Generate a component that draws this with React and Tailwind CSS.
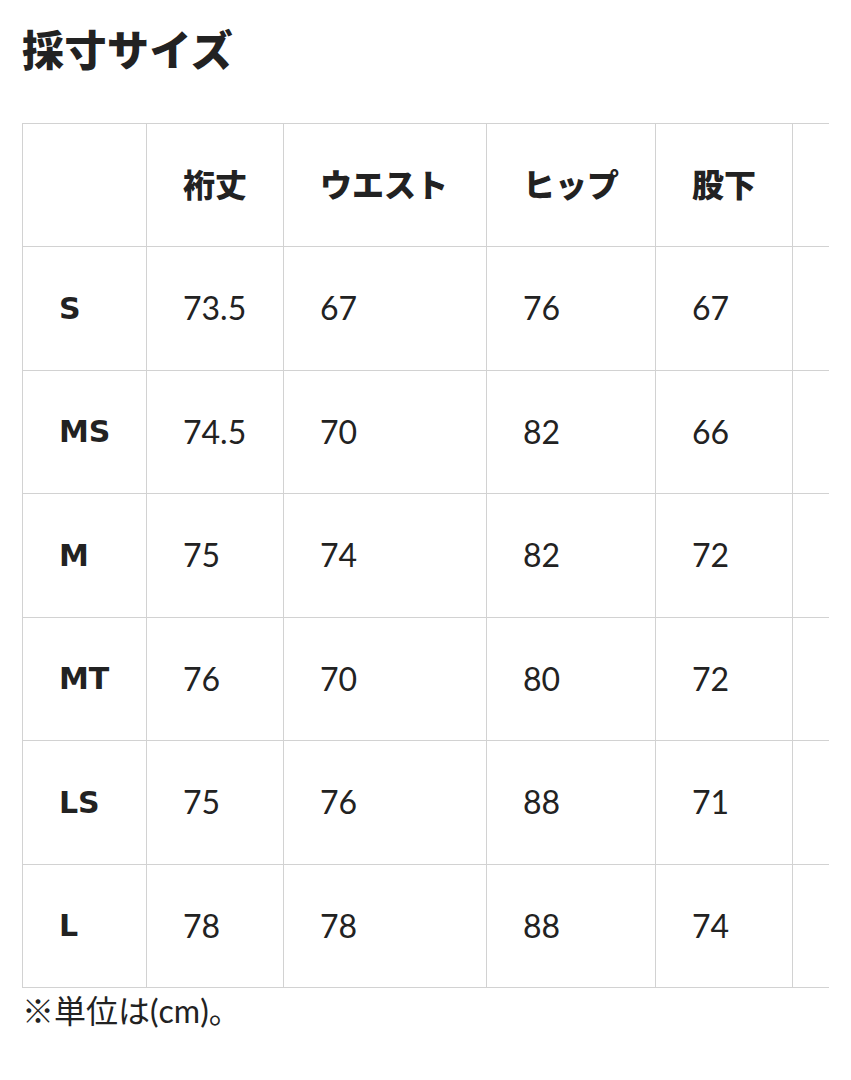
import React from 'react';

const columns = [
  { label: '', width: 'w-[124px]' },
  { label: '裄丈', width: 'w-[137px]' },
  { label: 'ウエスト', width: 'w-[203px]' },
  { label: 'ヒップ', width: 'w-[169px]' },
  { label: '股下', width: 'w-[137px]' },
  { label: '', width: 'w-[120px]' },
];

const rows = [
  { size: 'S', values: ['73.5', '67', '76', '67'] },
  { size: 'MS', values: ['74.5', '70', '82', '66'] },
  { size: 'M', values: ['75', '74', '82', '72'] },
  { size: 'MT', values: ['76', '70', '80', '72'] },
  { size: 'LS', values: ['75', '76', '88', '71'] },
  { size: 'L', values: ['78', '78', '88', '74'] },
];

const App = () => {
  return (
    <div className="min-h-screen bg-white pl-[22px] pt-[16px] text-[#222]">
      <h1 className="font-['Noto_Sans_CJK_JP',sans-serif] text-[42px] font-black leading-[63px] tracking-[0.5px]">
        採寸サイズ
      </h1>

      <div className="mt-[44px] w-[807px] overflow-hidden">
        <table className="w-[890px] table-fixed border-collapse border border-[#e2e2e2]">
          <thead>
            <tr className="h-[123px]">
              {columns.map((c, i) => (
                <th
                  key={i}
                  className={`${c.width} border border-[#d2d2d2] px-[36px] pb-[5px] text-left align-middle font-['Noto_Sans_CJK_JP',sans-serif] text-[32px] font-black whitespace-nowrap`}
                >
                  {c.label}
                </th>
              ))}
            </tr>
          </thead>
          <tbody>
            {rows.map((row) => (
              <tr key={row.size} className="h-[123.5px]">
                <td className="border border-[#d2d2d2] pl-[36px] pr-0 align-middle font-['DejaVu_Sans',sans-serif] text-[30px] font-bold">
                  {row.size}
                </td>
                {row.values.map((v, i) => (
                  <td
                    key={i}
                    className="border border-[#d2d2d2] px-[36px] align-middle font-['Lato',sans-serif] text-[32px] whitespace-nowrap"
                  >
                    {v}
                  </td>
                ))}
                <td className="border border-[#d2d2d2]" />
              </tr>
            ))}
          </tbody>
        </table>
      </div>

      <p className="font-['Lato','Noto_Sans_CJK_JP',sans-serif] text-[32px] leading-[45px]">
        ※単位は(cm)。
      </p>
    </div>
  );
};

export default App;
